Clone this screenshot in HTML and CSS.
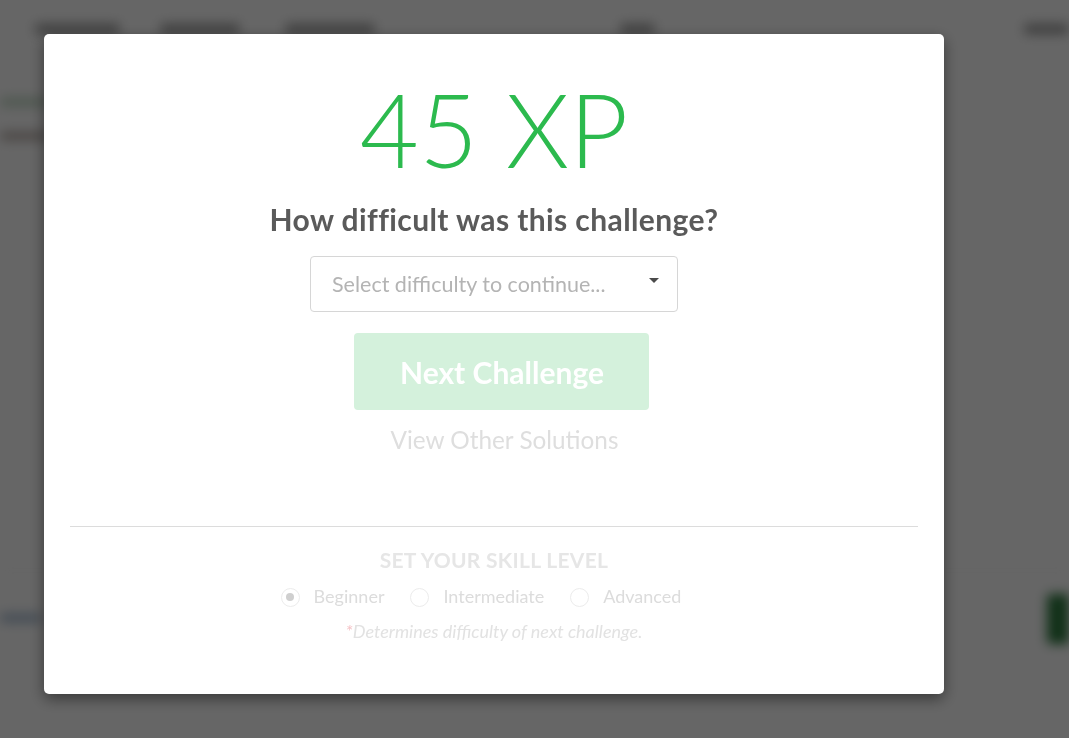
FILE: index.html
```html
<!DOCTYPE html>
<html lang="en">
<head>
<meta charset="utf-8">
<title>Challenge complete</title>
<link rel="stylesheet" href="styles.css">
</head>
<body>
<div class="page" aria-hidden="true">
  <header class="nav">
    <span class="blob n1"></span>
    <span class="blob n2"></span>
    <span class="blob n3"></span>
    <span class="blob n4"></span>
    <span class="blob n5"></span>
  </header>
  <div class="crumbs">
    <span class="crumb green"></span>
    <span class="crumb brown"></span>
  </div>
  <div class="band"></div>
  <div class="footer-row">
    <span class="link-blue"></span>
    <span class="spacer"></span>
    <span class="btn-green"></span>
  </div>
</div>

<div class="overlay">
  <div class="modal">
    <div class="xp">45 XP</div>
    <h2 class="question">How difficult was this challenge?</h2>
    <div class="select">
      <span class="placeholder">Select difficulty to continue...</span>
      <span class="caret"></span>
    </div>
    <button class="next" type="button">Next Challenge</button>
    <a class="other">View Other Solutions</a>
    <hr class="divider">
    <div class="skill">
      <div class="skill-title">SET YOUR SKILL LEVEL</div>
      <div class="radios">
        <label class="radio"><span class="circle checked"></span><span class="label">Beginner</span></label>
        <label class="radio"><span class="circle"></span><span class="label">Intermediate</span></label>
        <label class="radio"><span class="circle"></span><span class="label">Advanced</span></label>
      </div>
      <div class="note"><span class="star">*</span>Determines difficulty of next challenge.</div>
    </div>
  </div>
</div>
</body>
</html>
```

FILE: styles.css
```css
* { box-sizing: border-box; }

html, body {
  margin: 0;
  padding: 0;
  width: 1069px;
  height: 738px;
  overflow: hidden;
  font-family: Lato, "Open Sans", "Liberation Sans", sans-serif;
  background: #ffffff;
}

/* ---------- blurred page underneath ---------- */
.page {
  width: 1069px;
  height: 738px;
  filter: blur(6px);
  display: flex;
  flex-direction: column;
}

.nav {
  height: 58px;
  display: flex;
  align-items: center;
  padding-left: 35px;
}

.blob {
  height: 10px;
  border-radius: 4px;
  background: #9a9a9a;
}

.n1 { width: 85px; }
.n2 { width: 80px; margin-left: 40px; }
.n3 { width: 90px; margin-left: 45px; }
.n4 { width: 35px; margin-left: 245px; }
.n5 { width: 45px; margin-left: auto; }

.crumbs {
  margin-top: 40px;
  display: flex;
  flex-direction: column;
  gap: 26px;
}

.crumb {
  width: 48px;
  height: 8px;
  border-radius: 4px;
}
.crumb.green { background: #bcd6c0; }
.crumb.brown { background: #b3a8a2; }

.band {
  flex: 1;
}

.footer-row {
  height: 168px;
  display: flex;
  align-items: flex-start;
  padding-top: 23px;
  border-top: 1px solid #ececec;
}

.link-blue {
  width: 42px;
  height: 8px;
  margin-top: 20px;
  border-radius: 4px;
  background: #9fb6cf;
}

.spacer { flex: 1; }

.btn-green {
  width: 22px;
  height: 50px;
  border-radius: 4px 0 0 4px;
  background: #2c7a3e;
}

/* ---------- overlay + modal ---------- */
.overlay {
  position: fixed;
  inset: 0;
  background: rgba(0, 0, 0, 0.6);
  padding: 34px 0 0 44px;
}

.modal {
  width: 900px;
  height: 660px;
  background: #ffffff;
  border-radius: 5px;
  box-shadow: 0 5px 15px rgba(0, 0, 0, 0.45);
  padding: 44px 26px 0;
  display: flex;
  flex-direction: column;
  align-items: center;
  text-align: center;
}

.xp {
  font-size: 102px;
  line-height: 102px;
  font-weight: 300;
  color: #2cba4e;
  white-space: nowrap;
}

.question {
  margin: 23px 0 0;
  font-size: 30px;
  line-height: 33.6px;
  font-weight: 700;
  letter-spacing: 0.4px;
  color: #5a5a5a;
  white-space: nowrap;
}

.select {
  margin-top: 19px;
  width: 368px;
  height: 56px;
  border: 1px solid #d6d6d6;
  border-radius: 4px;
  display: flex;
  align-items: center;
  padding: 0 18px 0 21px;
}

.placeholder {
  flex: 1;
  text-align: left;
  font-size: 21.5px;
  color: #b4b4b4;
  white-space: nowrap;
}

.caret {
  width: 0;
  height: 0;
  border-left: 5px solid transparent;
  border-right: 5px solid transparent;
  border-top: 5px solid #4a4a4a;
  margin-top: -6px;
}

.next {
  margin: 21px 0 0 15px;
  width: 295px;
  height: 77px;
  border: none;
  border-radius: 4px;
  background: #d4f1dc;
  color: #ffffff;
  font-family: inherit;
  font-size: 30px;
  font-weight: 700;
  padding: 0 0 0 1px;
  line-height: 79px;
}

.other {
  margin: 16px 0 0 21px;
  font-size: 24.3px;
  line-height: 28.8px;
  color: #dedede;
}

.divider {
  align-self: stretch;
  margin: 72px 0 0;
  border: none;
  border-top: 1px solid #dcdcdc;
  height: 0;
}

.skill {
  display: flex;
  flex-direction: column;
  align-items: center;
}

.skill-title {
  margin-top: 21px;
  font-size: 21px;
  line-height: 24px;
  font-weight: 700;
  letter-spacing: 0.3px;
  color: #e6e6e6;
}

.radios {
  margin-top: 14px;
  margin-right: 26px;
  display: flex;
  align-items: center;
  gap: 26px;
}

.radio {
  display: flex;
  align-items: center;
  gap: 14px;
}

.circle {
  width: 19px;
  height: 19px;
  border-radius: 50%;
  border: 1px solid #ececec;
  display: flex;
  align-items: center;
  justify-content: center;
}

.circle.checked::after {
  content: "";
  width: 8px;
  height: 8px;
  border-radius: 50%;
  background: #cfcfcf;
}

.label {
  font-size: 18px;
  line-height: 21.6px;
  color: #dcdcdc;
}

.note {
  margin-top: 13px;
  font-size: 18px;
  line-height: 20.4px;
  font-style: italic;
  color: #e2e2e2;
}

.star {
  color: #f5c4c8;
}
```
